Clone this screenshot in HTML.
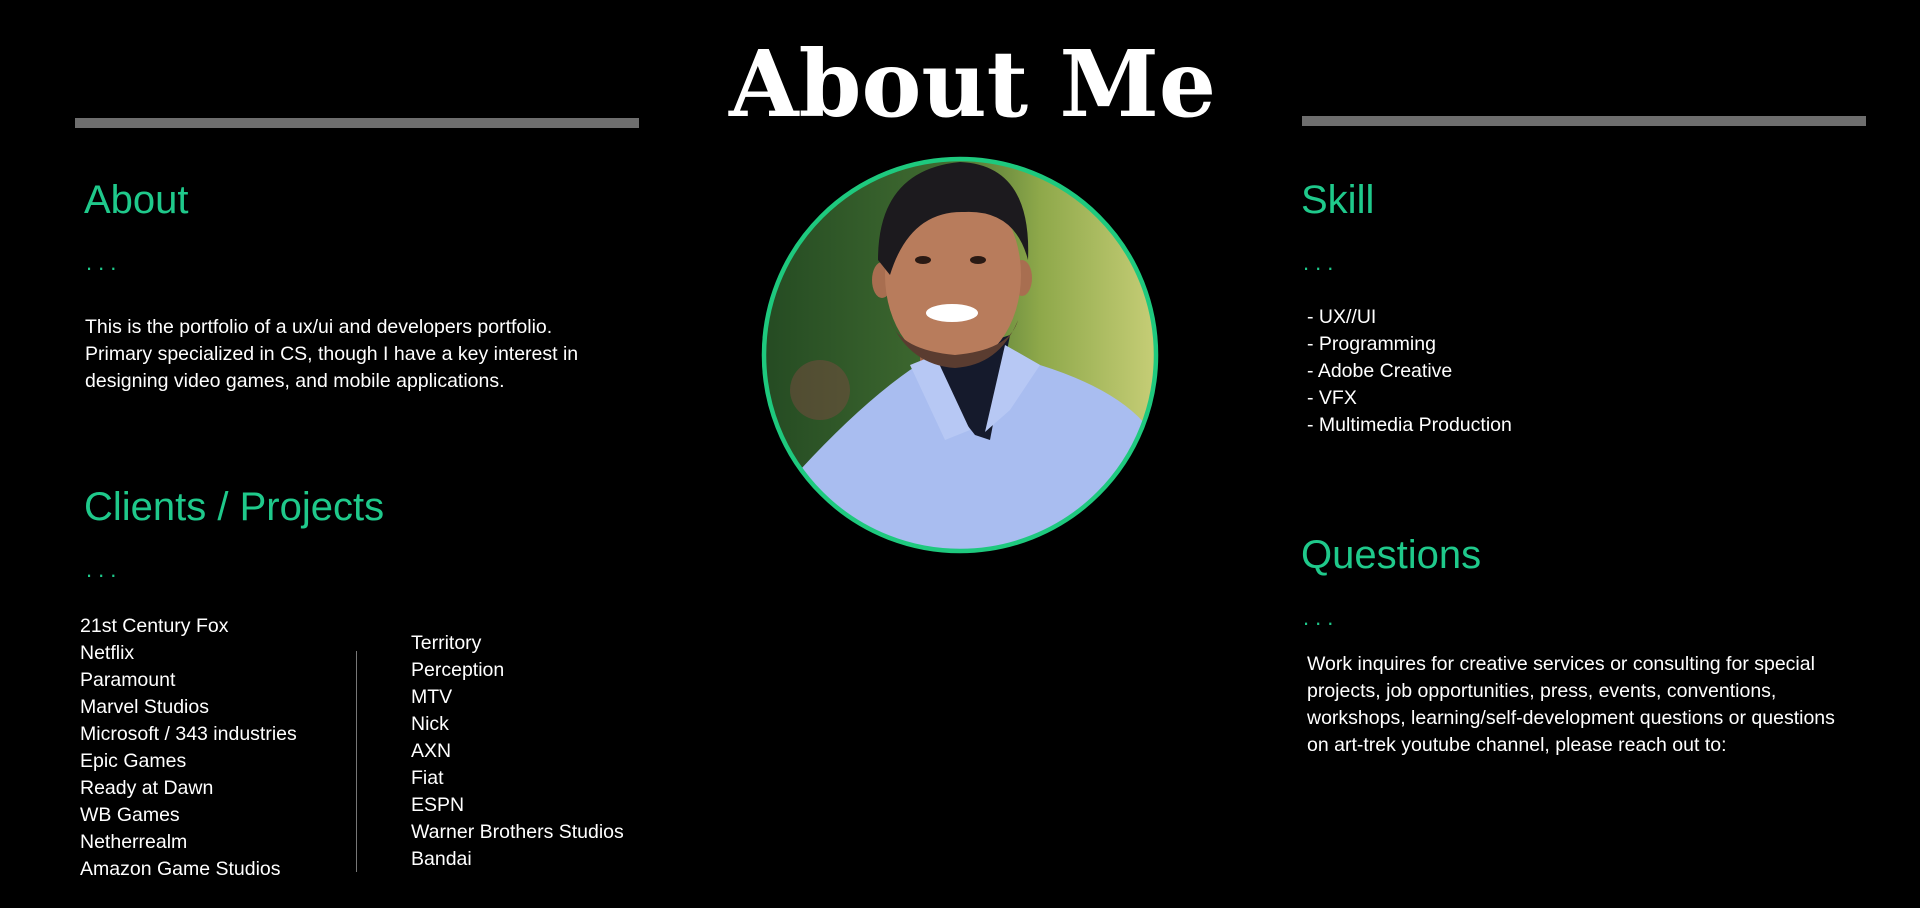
<!DOCTYPE html>
<html><head><meta charset="utf-8"><style>
html,body{margin:0;padding:0;background:#000;width:1920px;height:908px;overflow:hidden;position:relative;font-family:"Liberation Sans",sans-serif;color:#fff}
.a{position:absolute;white-space:nowrap}
.h{color:#1fc98b;font-size:40px;line-height:44px;font-weight:300;letter-spacing:0px}
.d{color:#1fc98b;font-size:22px;line-height:22px;letter-spacing:6px}
.t{font-size:19.5px;line-height:27px;letter-spacing:0px}
.bar{position:absolute;background:#6e6e6e;height:10px}
</style></head><body>
<svg class="a" style="left:0;top:0" width="1920" height="160">
<text x="729" y="116" font-family="DejaVu Serif, Liberation Serif, serif" font-weight="bold" font-size="92" fill="#fff" textLength="487" lengthAdjust="spacingAndGlyphs">About Me</text>
</svg>
<div class="bar" style="left:75px;top:118px;width:564px"></div>
<div class="bar" style="left:1302px;top:116px;width:564px"></div>

<svg class="a" style="left:760px;top:150px" width="400" height="410" viewBox="0 0 400 410">
<defs>
<clipPath id="c"><circle cx="200" cy="205" r="196"/></clipPath>
<linearGradient id="bg" x1="0" x2="1" y1="0" y2="0"><stop offset="0" stop-color="#244a22"/><stop offset="0.45" stop-color="#3f6a30"/><stop offset="0.7" stop-color="#8ea84a"/><stop offset="1" stop-color="#c8cf78"/></linearGradient>
</defs>
<g clip-path="url(#c)">
<rect width="400" height="410" fill="url(#bg)"/>
<circle cx="60" cy="240" r="30" fill="#7a4a40" opacity="0.5"/>
<rect x="160" y="170" width="80" height="70" fill="#9a6448"/>
<path d="M40 320 Q100 255 150 220 L175 205 L245 195 L280 215 Q360 240 390 280 L400 410 L0 410 Z" fill="#a9bdf0"/>
<path d="M160 215 L250 185 L230 290 L215 285 Z" fill="#151a2c"/>
<path d="M150 215 L175 205 L210 280 L185 290 Z" fill="#b7c8f4"/>
<path d="M245 195 L280 215 L250 260 L225 282 Z" fill="#b7c8f4"/>
<path d="M320 380 L400 330 L400 410 L300 410 Z" fill="#3d5fd8"/>
<ellipse cx="122" cy="130" rx="10" ry="18" fill="#a86e50"/>
<ellipse cx="262" cy="128" rx="10" ry="18" fill="#a86e50"/>
<ellipse cx="193" cy="125" rx="68" ry="92" fill="#b87c5c"/>
<path d="M130 170 Q150 215 195 218 Q240 215 258 170 Q250 200 195 205 Q140 200 130 170Z" fill="#5a3c30"/>
<ellipse cx="192" cy="163" rx="26" ry="9" fill="#fff"/>
<ellipse cx="163" cy="110" rx="8" ry="4" fill="#2a1a14"/>
<ellipse cx="218" cy="110" rx="8" ry="4" fill="#2a1a14"/>
<path d="M118 110 Q118 20 200 12 Q272 15 268 110 Q255 60 205 62 Q150 60 130 125 Z" fill="#1c1a1e"/>
</g>
<circle cx="200" cy="205" r="196" fill="none" stroke="#1ec97e" stroke-width="4.5"/>
</svg>

<div class="a h" style="left:84px;top:178px">About</div>
<div class="a d" style="left:86px;top:252px">...</div>
<div class="a t" style="left:85px;top:314px">This is the portfolio of a ux/ui and developers portfolio.<br>Primary specialized in CS, though I have a key interest in<br>designing video games, and mobile applications.</div>

<div class="a h" style="left:84px;top:485px">Clients / Projects</div>
<div class="a d" style="left:86px;top:559px">...</div>
<div class="a t" style="left:80px;top:613px">21st Century Fox<br>Netflix<br>Paramount<br>Marvel Studios<br>Microsoft / 343 industries<br>Epic Games<br>Ready at Dawn<br>WB Games<br>Netherrealm<br>Amazon Game Studios</div>
<div class="a" style="left:356px;top:651px;width:1px;height:221px;background:#777"></div>
<div class="a t" style="left:411px;top:630px">Territory<br>Perception<br>MTV<br>Nick<br>AXN<br>Fiat<br>ESPN<br>Warner Brothers Studios<br>Bandai</div>

<div class="a h" style="left:1301px;top:178px">Skill</div>
<div class="a d" style="left:1303px;top:252px">...</div>
<div class="a t" style="left:1307px;top:304px">- UX//UI<br>- Programming<br>- Adobe Creative<br>- VFX<br>- Multimedia Production</div>

<div class="a h" style="left:1301px;top:533px">Questions</div>
<div class="a d" style="left:1303px;top:607px">...</div>
<div class="a t" style="left:1307px;top:651px">Work inquires for creative services or consulting for special<br>projects, job opportunities, press, events, conventions,<br>workshops, learning/self-development questions or questions<br>on art-trek youtube channel, please reach out to:</div>
</body></html>
